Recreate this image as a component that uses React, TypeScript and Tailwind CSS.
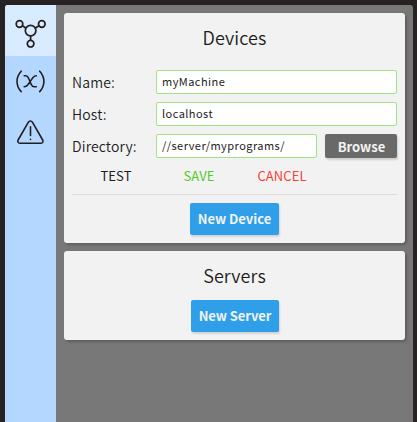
import type { ReactNode } from "react";

function DevicesIcon() {
  return (
    <svg width="32" height="30" viewBox="0 0 32 30" fill="none" stroke="#231f20" strokeWidth="1.7">
      <circle cx="15.6" cy="12.6" r="5.3" />
      <circle cx="4.5" cy="6" r="3.3" />
      <circle cx="26.8" cy="6" r="3.3" />
      <circle cx="15.6" cy="25.7" r="3.3" />
      <path d="M7.4 7.7 10.8 10M23.9 7.7 20.4 10M15.6 18v4.4" />
    </svg>
  );
}

function VariablesIcon() {
  return (
    <svg width="32" height="24" viewBox="0 0 32 24" fill="none" stroke="#231f20" strokeWidth="1.6" strokeLinecap="round" strokeLinejoin="round">
      <path d="M6.200 1.200C.6 7.300.6 15.500 6.200 21.600M24.700 1.200c5.600 6.100 5.600 14.300 0 20.400" />
      <path d="M9.200 5.800h1.500c1.600 0 2.200.8 2.900 2.400l2.500 6c.7 1.600 1.300 2.600 3 2.600h2.200M21.300 5.800c-1.400 0-2.200.4-3.200 1.600l-5.400 7.600c-1 1.300-1.800 1.800-3.500 1.800" />
    </svg>
  );
}

function WarningIcon() {
  return (
    <svg width="32" height="26" viewBox="0 0 32 26" fill="none" stroke="#231f20" strokeWidth="1.6" strokeLinecap="round" strokeLinejoin="round">
      <path d="M13.400 2.200c.9-1.600 3.100-1.600 4 0l10.300 17.800c.8 1.600 0 3.300-1.700 3.300H4.800c-1.700 0-2.500-1.700-1.700-3.300z" />
      <path d="M15.500 6.900v8.500M15.500 19.200v.2" />
    </svg>
  );
}

function Card({ title, children }: { title: string; children: ReactNode }) {
  return (
    <section className="flex flex-col rounded-[3px] bg-[#f2f2f2] px-2 pb-2 shadow-[2px_2px_3px_rgba(0,0,0,0.22)]">
      <h2 className="h-[49px] pt-[9px] text-center text-[18px] leading-[30px] font-[350] tracking-[0.1px]">{title}</h2>
      {children}
    </section>
  );
}

function Field({ label, value, children }: { label: string; value: string; children?: ReactNode }) {
  return (
    <div className="flex h-6 gap-2">
      <label className="w-[76px] shrink-0 text-[14px] leading-6 font-[350] tracking-[0.15px]">{label}</label>
      <input
        readOnly
        value={value}
        className="h-6 min-w-0 flex-1 rounded-[2px] border border-[#a0e482] bg-white px-[5px] pb-[2px] text-[11px] leading-5 tracking-[0.45px] outline-none"
      />
      {children}
    </div>
  );
}

export default function App() {
  return (
    <div className="h-[422px] w-[417px] overflow-hidden bg-[#292223] pt-[5px] pr-1 pl-[5px] font-['Noto_Sans_CJK_SC',sans-serif] text-[#1c1c1c]">
      <div className="flex h-full overflow-hidden rounded-t-[3px] bg-[#787878]">
        <nav className="flex w-[51px] shrink-0 flex-col bg-[#b3d7ff]">
          <button className="flex h-[51px] items-start bg-[#d9ebff] pt-[13px] pl-[10px]"><DevicesIcon /></button>
          <button className="flex h-[51px] items-start pt-[14px] pl-[10px]"><VariablesIcon /></button>
          <button className="flex h-[51px] items-start pt-[13px] pl-[10px]"><WarningIcon /></button>
        </nav>
        <main className="flex flex-1 flex-col gap-2 p-2">
          <Card title="Devices">
            <div className="mt-2 flex flex-col gap-2">
              <Field label="Name:" value="myMachine" />
              <Field label="Host:" value="localhost" />
              <Field label="Directory:" value="//server/myprograms/">
                <button className="h-6 w-[72px] rounded-[2px] bg-[#696969] pt-px pl-px text-[13px] leading-[23px] font-bold text-[#f2f2f2] shadow-[1px_2px_2px_rgba(0,0,0,0.15)]">Browse</button>
              </Field>
            </div>
            <div className="flex h-9 pl-[2.5px] text-[13px] leading-9 tracking-[0.1px]">
              <button className="w-[83px]">TEST</button>
              <button className="w-[83px] text-[#53c92b]">SAVE</button>
              <button className="w-[83px] text-[#f44336]">CANCEL</button>
            </div>
            <hr className="border-t border-[#dcdcdc]" />
            <button className="mt-2 ml-[118px] h-8 w-[89px] rounded-[2px] bg-[#2e9fe8] text-[13px] leading-8 font-bold text-[#f2f2f2] shadow-[1px_2px_2px_rgba(0,0,0,0.13)]">New Device</button>
          </Card>
          <Card title="Servers">
            <button className="ml-[119px] h-8 w-[88px] rounded-[2px] bg-[#2e9fe8] text-[13px] leading-8 font-bold tracking-[-0.1px] text-[#f2f2f2] shadow-[1px_2px_2px_rgba(0,0,0,0.13)]">New Server</button>
          </Card>
        </main>
      </div>
    </div>
  );
}
